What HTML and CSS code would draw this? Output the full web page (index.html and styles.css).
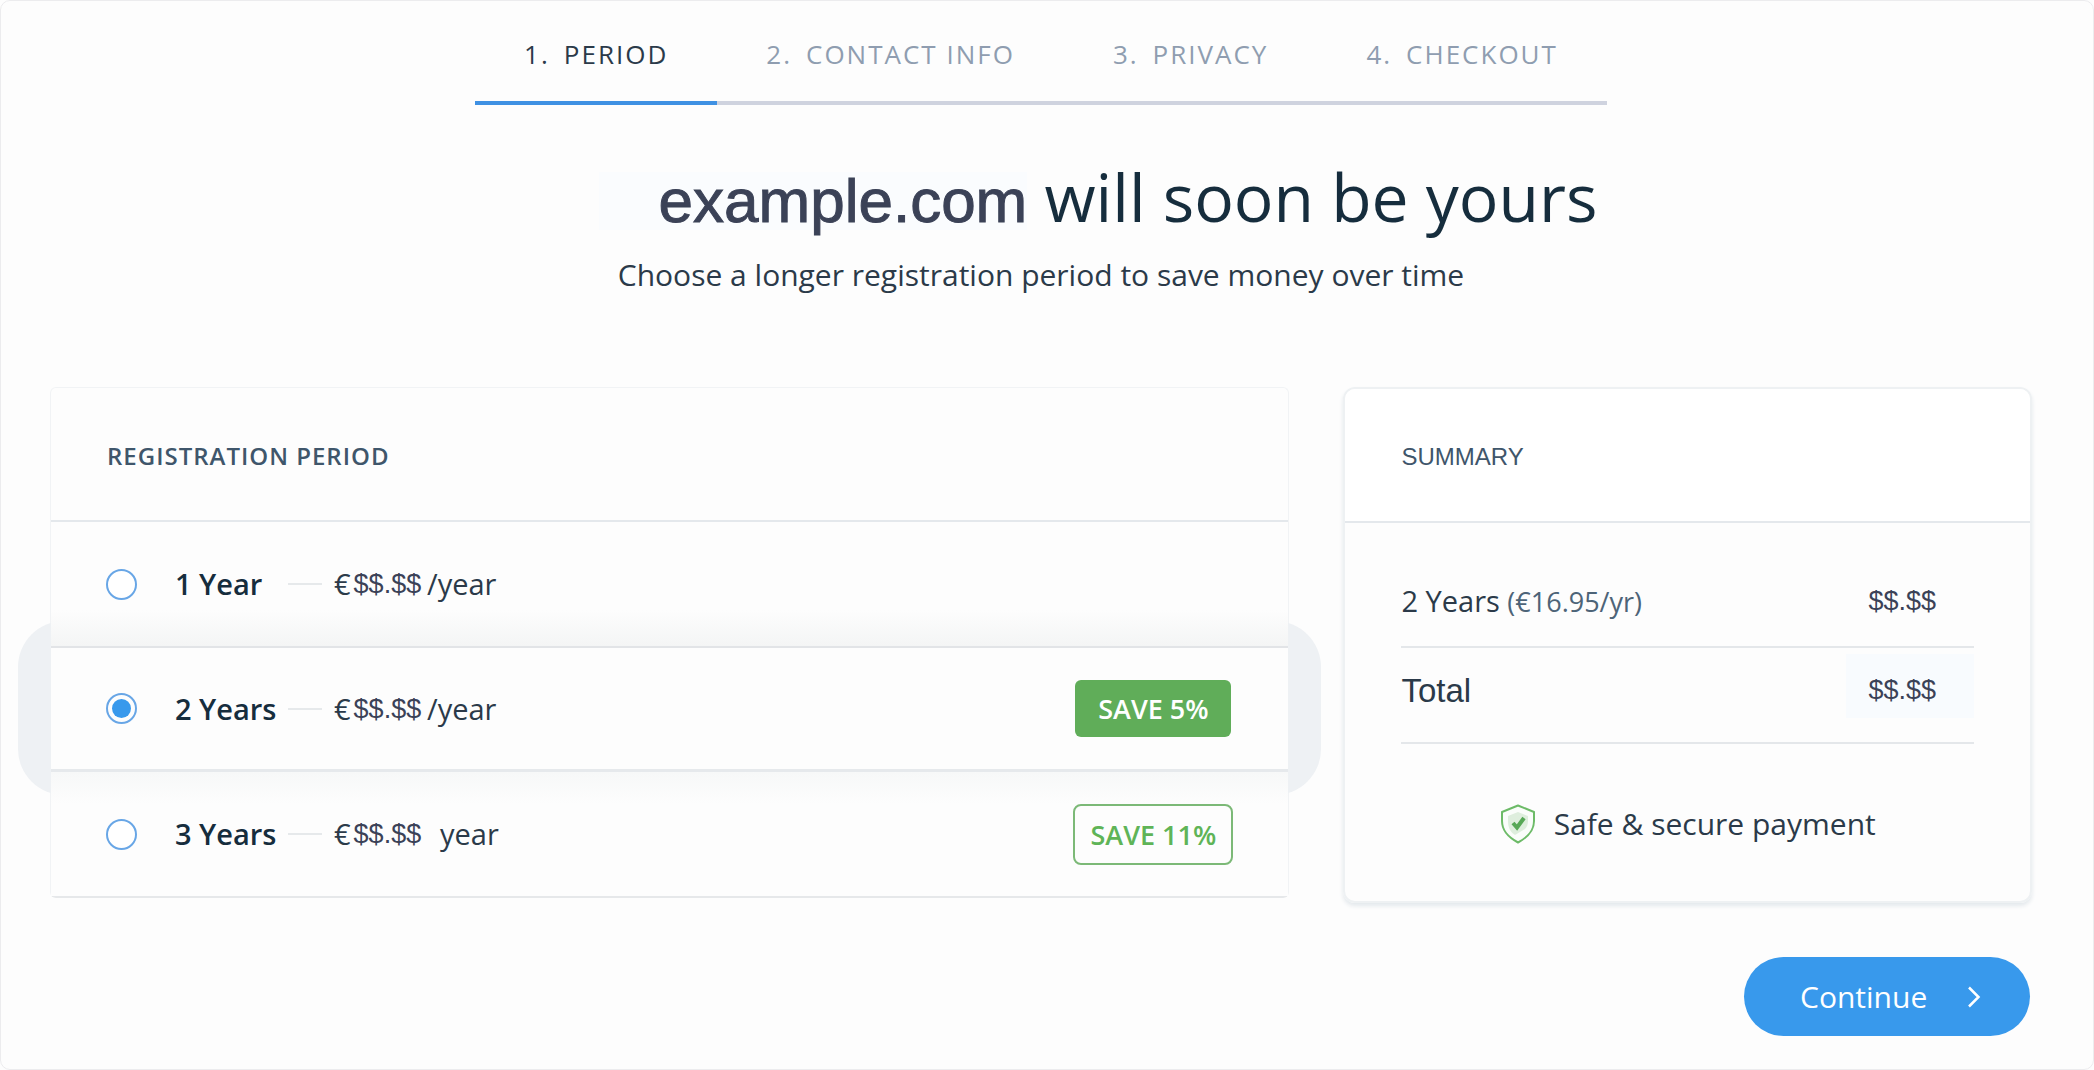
FILE: index.html
```html
<!DOCTYPE html>

<html lang="en">

  <head>

    <meta charset="utf-8">

    <meta name="viewport" content="width=device-width, initial-scale=1.0">

    <title>Domain Checkout</title>

    <link rel="stylesheet" href="styles.css">

  </head>

  <body>

    <div class="page">

      <!--Steps-->

      <nav class="steps">

        <a href="#" class="step active"><span>1.</span><span>PERIOD</span></a>

        <a href="#" class="step"><span>2.</span><span>CONTACT INFO</span></a>

        <a href="#" class="step"><span>3.</span><span>PRIVACY</span></a>

        <a href="#" class="step"><span>4.</span><span>CHECKOUT</span></a>

      </nav>

      <h1><span class="domain">example.com</span> will soon be yours</h1>

      <p class="subtitle">Choose a longer registration period to save money over time</p>

      <form class="content" onsubmit="return false">

        <!--Registration Period-->

        <section class="period">

          <h2>REGISTRATION PERIOD</h2>

          <label class="option above">

            <input type="radio" name="period" value="1">

            <b>1 Year</b>

            <i class="dash"></i>

            <span class="price">€<span class="amount">$$.$$</span></span>

            <span>/year</span>

          </label>

          <label class="option selected">

            <input type="radio" name="period" value="2" checked>

            <b>2 Years</b>

            <i class="dash"></i>

            <span class="price">€<span class="amount">$$.$$</span></span>

            <span>/year</span>

            <span class="badge full">SAVE 5%</span>

          </label>

          <label class="option below">

            <input type="radio" name="period" value="3">

            <b>3 Years</b>

            <i class="dash"></i>

            <span class="price">€<span class="amount">$$.$$</span></span>

            <span class="indent">year</span>

            <span class="badge">SAVE 11%</span>

          </label>

        </section>

        <!--Summary-->

        <aside class="side">

          <section class="summary">

            <h2>SUMMARY</h2>

            <dl>

              <div class="line">

                <dt>2 Years <small>(€16.95/yr)</small></dt>

                <dd>$$.$$</dd>

              </div>

              <div class="line total">

                <dt>Total</dt>

                <dd>$$.$$</dd>

              </div>

            </dl>

            <p class="secure">

              <svg width="36" height="40" viewBox="0 0 36 40" fill="none" aria-hidden="true">
                <path d="M18 1.5L34 8V17C34 27 28 33 18 38.5C8 33 2 27 2 17V8Z" fill="#fafdfa" stroke="#6dbb68" stroke-width="2" stroke-linejoin="round"/>
                <path d="M18 8L28 12V17C28 20 27 23 25 25L15 31C10 28 8 23 8 17V12Z" fill="#deeedd"/>
                <path d="M13 19L17 23.5L24 14" stroke="#57a856" stroke-width="4"/>
              </svg>

              Safe &amp; secure payment

            </p>

          </section>

          <button class="continue" type="submit">

            Continue

            <svg width="14" height="22" viewBox="0 0 14 22" fill="none" aria-hidden="true">
              <path d="M2 1.5L11.5 11L2 20.5" stroke="#fff" stroke-width="2.5"/>
            </svg>

          </button>

        </aside>

      </form>

    </div>

  </body>

</html>
```
FILE: styles.css
```css
* {

  box-sizing: border-box;

}

body {

  margin: 0;

  background-color: #fdfdfd;

  color: #2b3a49;

  font-family: "Open Sans", sans-serif;

  font-size: 30px;

  line-height: 40px;

}

h1, h2, p, dl, dd {

  margin: 0;

}

.page {

  min-height: 100vh;

  padding: 0 61px 32px 49px;

  border: 1px solid #ececee;

  border-radius: 10px;

}

/* Steps */

.steps {

  display: flex;

  width: fit-content;

  margin: 0 auto;

}

.step {

  display: flex;

  gap: 14px;

  padding: 35px 49px 29px;

  border-bottom: 4px solid #cfd3df;

  color: #8f9db0;

  font-size: 26px;

  line-height: 36px;

  letter-spacing: 2px;

  text-decoration: none;

}

.step.active {

  border-color: #3f91e3;

  color: #2b3a49;

}

h1 {

  margin-top: 51px;

  padding-left: 114px;

  color: #162d3d;

  font-size: 66px;

  font-weight: 400;

  line-height: 80px;

  text-align: center;

}

.domain {

  display: inline-block;

  padding-left: 60px;

  background-color: #fafcfe;

  color: #3b4257;

  font-family: "Liberation Sans", Arial, sans-serif;

  font-size: 62px;

  line-height: 58px;

  -webkit-text-stroke: 1px #3b4257;

}

.subtitle {

  margin-top: 19px;

  text-align: center;

}

.content {

  display: grid;

  grid-template-columns: 9fr 5fr;

  gap: 54px;

  align-items: start;

  margin-top: 92px;

}

h2 {

  padding: 48px 56px 44px;

  border-bottom: 2px solid #e4e8ec;

  color: #3f566b;

  font-size: 24px;

  line-height: 40px;

}

/* Registration Period */

.period {

  isolation: isolate;

  border: 1px solid #f1f3f5;

  border-bottom: 2px solid #e6e8ea;

  border-radius: 6px;

}

.period h2 {

  font-weight: 600;

  letter-spacing: 1px;

}

.option {

  display: grid;

  grid-template-columns: 69px 113px 46px 93px 1fr auto;

  align-items: center;

  height: 124px;

  padding: 0 55px;

  background-color: #fdfdfd;

  font-size: 29px;

}

.option b {

  color: #162d3d;

  font-weight: 600;

}

.option input {

  appearance: none;

  width: 31px;

  height: 31px;

  margin: 0;

  padding: 4px;

  border: 2px solid #68a6e6;

  border-radius: 50%;

  background-color: #fff;

}

.option input:checked {

  background-color: #3899ec;

  background-clip: content-box;

}

.above {

  background-image: linear-gradient(to top, #f4f5f5, #fdfdfd 36px);

}

.below {

  background-image: linear-gradient(to bottom, #f7f8f8, #fdfdfd 32px);

}

.selected {

  position: relative;

  height: 126px;

  border-top: 2px solid #e2e4e7;

  border-bottom: 3px solid #e6e9ec;

}

/* soft shape behind the selected row */

.selected::before {

  content: "";

  position: absolute;

  z-index: -1;

  top: -27px;

  bottom: -26px;

  left: -33px;

  right: -33px;

  border-radius: 46px;

  background-color: #eef1f4;

}

.dash {

  width: 34px;

  height: 2px;

  background-color: #e6e9eb;

}

.price {

  display: flex;

  gap: 3px;

}

.amount {

  color: #3b4257;

  font-family: "Liberation Sans", Arial, sans-serif;

  font-size: 27px;

}

.indent {

  padding-left: 13px;

}

.badge {

  min-width: 160px;

  border: 2px solid #7cb977;

  border-radius: 8px;

  color: #5fb457;

  font-size: 27px;

  font-weight: 600;

  line-height: 57px;

  text-align: center;

}

.badge.full {

  min-width: 156px;

  margin-right: 2px;

  border: 0;

  border-radius: 6px;

  background-color: #60ad59;

  color: #fff;

}

/* Summary */

.side {

  display: flex;

  flex-direction: column;

  gap: 54px;

}

.summary {

  border: 2px solid #eef1f3;

  border-radius: 12px;

  box-shadow: 0 3px 4px #e3e8ec;

}

.summary h2 {

  border-radius: 10px 10px 0 0;

  background-color: #fff;

  font-family: "Liberation Sans", Arial, sans-serif;

  font-weight: 400;

}

.summary dl {

  padding: 0 56px;

}

.line {

  display: flex;

  justify-content: space-between;

  padding: 58px 0 24px;

  border-bottom: 2px solid #e4e7ea;

  font-size: 29px;

}

.line small {

  color: #4d6478;

  font-size: 27px;

}

.line dd {

  width: 128px;

  padding-right: 38px;

  color: #3b4257;

  font-family: "Liberation Sans", Arial, sans-serif;

  font-size: 27px;

  text-align: right;

}

.total {

  align-items: center;

  padding: 6px 0 24px;

}

.total dt {

  padding-top: 10px;

  font-family: "Liberation Sans", Arial, sans-serif;

  font-size: 33px;

}

.total dd {

  padding-top: 8px;

  background-color: #f8fbfe;

  line-height: 56px;

}

.secure {

  display: flex;

  justify-content: center;

  align-items: center;

  gap: 18px;

  padding: 60px 0 57px;

}

.continue {

  display: flex;

  justify-content: space-between;

  align-items: center;

  align-self: flex-end;

  width: 286px;

  height: 79px;

  margin-right: 2px;

  padding: 0 49px 0 56px;

  border: 0;

  border-radius: 40px;

  background-color: #3899ec;

  color: #fff;

  font: inherit;

  cursor: pointer;

}
```
